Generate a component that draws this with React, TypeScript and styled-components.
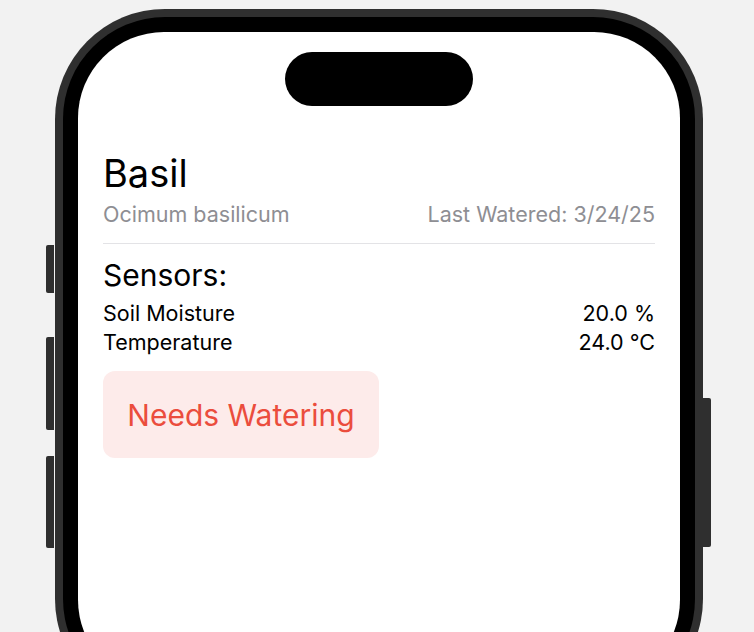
import React from "react";
import styled, { createGlobalStyle } from "styled-components";

const Global = createGlobalStyle`
  html, body { margin: 0; padding: 0; background: #f2f2f2; overflow: hidden; }
  body { font-family: Inter, "Noto Sans", "Liberation Sans", sans-serif; }
`;

const Stage = styled.div`
  width: 754px;
  height: 632px;
  display: flex;
  justify-content: center;
  padding: 9px 0 0 4px;
  box-sizing: border-box;
  overflow: hidden;
  background: #f2f2f2;
`;

const Device = styled.div`
  position: relative;
  width: 648px;
  height: 700px;
  flex: none;
`;

const SideButton = styled.div<{ $side: "left" | "right"; $top: number; $h: number }>`
  position: absolute;
  top: ${(p) => p.$top}px;
  ${(p) => (p.$side === "left" ? "left: -9px;" : "right: -8px;")}
  width: 8px;
  height: ${(p) => p.$h}px;
  background: #2f2f2f;
  border-radius: ${(p) => (p.$side === "left" ? "2px 0 0 2px" : "0 2px 2px 0")};
`;

const Bezel = styled.div`
  height: 100%;
  box-sizing: border-box;
  padding: 8px;
  background: #2f2f2f;
  border-radius: 110px;
  display: flex;
`;

const Frame = styled.div`
  flex: 1;
  display: flex;
  padding: 15px;
  background: #000;
  border-radius: 102px;
`;

const Screen = styled.div`
  flex: 1;
  background: #fff;
  border-radius: 86px;
  display: flex;
  flex-direction: column;
  align-items: stretch;
  padding: 20px 25px 0;
`;

const Island = styled.div`
  align-self: center;
  width: 188px;
  height: 54px;
  border-radius: 27px;
  background: #000;
`;

const Title = styled.h1`
  margin: 44px 0 0;
  font-size: 38px;
  font-weight: 400;
  line-height: 46px;
  color: #000;
`;

const SubRow = styled.div`
  display: flex;
  justify-content: space-between;
  align-items: baseline;
  margin-top: 5px;
  padding-bottom: 16px;
  border-bottom: 1px solid #e3e3e6;
`;

const Muted = styled.span`
  font-size: 21.5px;
  line-height: 26px;
  color: #8e8e93;
`;

const SectionTitle = styled.h2`
  margin: 13px 0 0;
  font-size: 30px;
  font-weight: 400;
  line-height: 36px;
  color: #000;
`;

const SensorList = styled.div`
  margin-top: 6px;
  display: flex;
  flex-direction: column;
`;

const SensorRow = styled.div`
  display: flex;
  justify-content: space-between;
  font-size: 21.5px;
  line-height: 29px;
  color: #000;
`;

const Alert = styled.div`
  align-self: flex-start;
  margin-top: 14px;
  width: 276px;
  height: 87px;
  box-sizing: border-box;
  display: flex;
  align-items: center;
  justify-content: center;
  background: #fdebea;
  border-radius: 12px;
  color: #eb4d3d;
  font-size: 30px;
`;

export default function App() {
  return (
    <>
      <Global />
      <Stage>
        <Device>
          <SideButton $side="left" $top={236} $h={48} />
          <SideButton $side="left" $top={328} $h={93} />
          <SideButton $side="left" $top={447} $h={92} />
          <SideButton $side="right" $top={389} $h={149} />
          <Bezel>
            <Frame>
              <Screen>
                <Island />
                <Title>Basil</Title>
                <SubRow>
                  <Muted>Ocimum basilicum</Muted>
                  <Muted>Last Watered: 3/24/25</Muted>
                </SubRow>
                <SectionTitle>Sensors:</SectionTitle>
                <SensorList>
                  <SensorRow>
                    <span>Soil Moisture</span>
                    <span>20.0 %</span>
                  </SensorRow>
                  <SensorRow>
                    <span>Temperature</span>
                    <span>24.0 °C</span>
                  </SensorRow>
                </SensorList>
                <Alert>Needs Watering</Alert>
              </Screen>
            </Frame>
          </Bezel>
        </Device>
      </Stage>
    </>
  );
}
